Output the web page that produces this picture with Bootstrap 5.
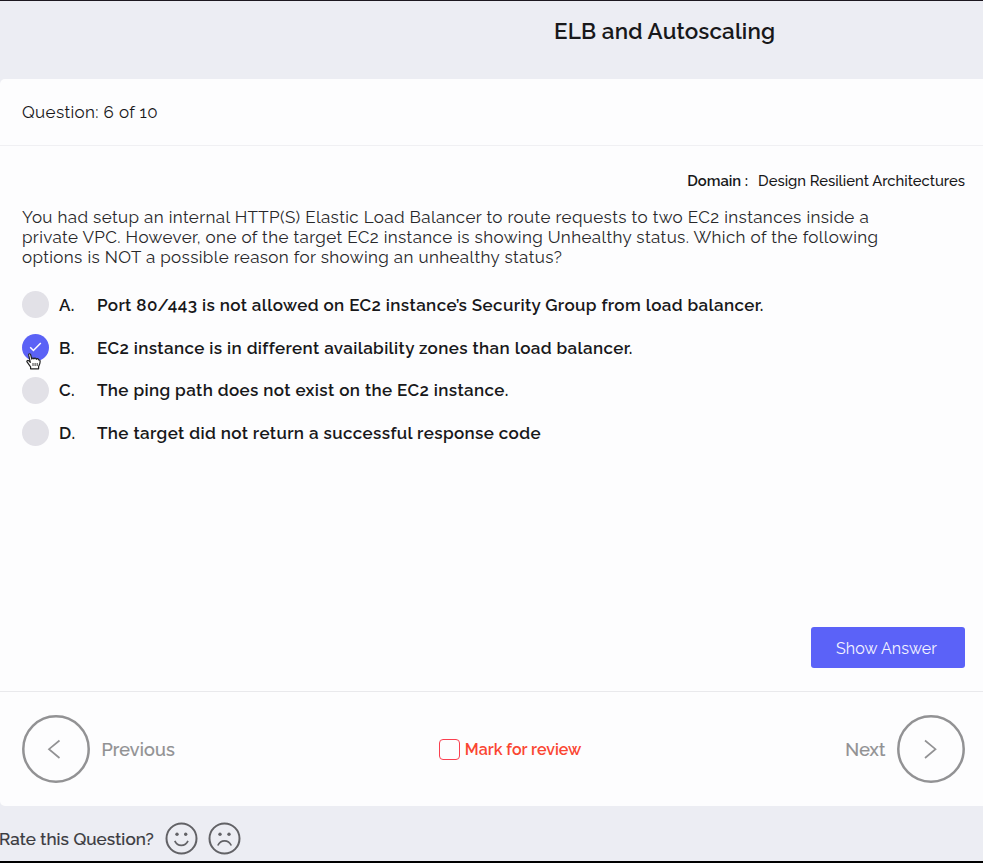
<!DOCTYPE html>
<html lang="en">
<head>
<meta charset="utf-8">
<meta name="viewport" content="width=device-width, initial-scale=1">
<title>ELB and Autoscaling</title>
<link href="https://cdn.jsdelivr.net/npm/bootstrap@5.3.0/dist/css/bootstrap.min.css" rel="stylesheet">
<style>
body{font-family:Raleway,Lato,"Open Sans",sans-serif;background:#ecedf3;color:#18181a;height:863px;overflow:hidden;border-top:1px solid #1d1820;border-bottom:2px solid #000;white-space:nowrap}
.quiz-head{height:78px;padding:15px 0 0 554px}
.quiz-title{font-size:22.4px;font-weight:600;line-height:30px;letter-spacing:.16px}
.quiz-panel{height:727px;background:#fdfdfe;border-radius:5px 0 0 5px}
.quiz-count{height:67px;padding:1px 0 0 22px;font-size:17px;letter-spacing:.36px;border-bottom:1px solid #f0f0f3}
.quiz-body{height:546px;padding:22px 18px 23px 22px;border-bottom:1px solid #e9e9ec}
.domain{font-size:14.8px;line-height:25px;font-weight:500}
.domain-key{font-weight:600;margin-right:10px}
.prompt{font-size:17px;line-height:20px;margin-top:14px;color:#28282a;letter-spacing:.37px}
.options{margin-top:16.5px}
.option{height:42.7px;font-size:17px;font-weight:600;letter-spacing:.37px}
.letter,.answer{padding-top:2px}
.dot{width:27px;height:27px;background:#e2e1e7;margin-right:10px}
.dot.picked{background:#5b62f6}
.dot svg{display:block}
.letter{width:38px}
.hand{left:4px;top:18px}
.btn-answer{width:154px;height:41px;background:#5b62f8;color:#f4f4ff;border-radius:3px;font-size:16px;letter-spacing:.12px;padding:2px 3px 0 0}
.quiz-nav{height:114px;padding:0 18px 0 22px;color:#919193;font-size:18px;font-weight:500}
.nav-side{gap:11.5px}
.nav-text{padding-top:1px;letter-spacing:.15px;-webkit-text-stroke:.2px #919193}
.review{color:#fa4632;font-size:16px;font-weight:600}
.review-text{padding-top:2px}
.box{width:21px;height:21px;border:1px solid #fa4050;border-radius:4px;margin-right:5px}
.rate{height:55px;padding-top:9px;font-size:17.1px;font-weight:500;color:#3b3b3f}
.rate-text{width:166px;padding-top:3px;margin-left:-1px;letter-spacing:.09px;-webkit-text-stroke:.2px #3b3b3f}
.faces{gap:10px}
</style>
</head>
<body>
<header class="quiz-head"><h1 class="quiz-title mb-0">ELB and Autoscaling</h1></header>
<main class="quiz-panel d-flex flex-column">
<div class="quiz-count d-flex align-items-center">Question: 6 of 10</div>
<section class="quiz-body d-flex flex-column">
<div class="domain d-flex justify-content-end"><span class="domain-key">Domain :</span><span>Design Resilient Architectures</span></div>
<p class="prompt mb-0">You had setup an internal HTTP(S) Elastic Load Balancer to route requests to two EC2 instances inside a<br>private VPC. However, one of the target EC2 instance is showing Unhealthy status. Which of the following<br>options is NOT a possible reason for showing an unhealthy status?</p>
<div class="options">
<div class="option d-flex align-items-center"><span class="dot rounded-circle"></span><span class="letter">A.</span><span class="answer">Port 80/443 is not allowed on EC2 instance’s Security Group from load balancer.</span></div>
<div class="option d-flex align-items-center"><span class="dot picked rounded-circle position-relative">
<svg width="27" height="27" viewBox="0 0 27 27" fill="none" stroke="#fff" stroke-width="1.5"><path d="M8.2 13.2l3.2 3.3 7.4-7.6"/></svg>
<svg class="hand position-absolute" width="15" height="18" viewBox="0 0 15 18" fill="#fff" stroke="#222" stroke-width="1.2" stroke-linejoin="round"><path d="M4.6 16.8v-2L1.2 10.200C.3 9 1.700 7.800 2.900 8.900L4.300 10.300 2.700 3.200C2.400 1.500 4.300 1.200 4.700 2.800L5.800 7.200C5.700 5.800 7.700 5.600 8 7c.2-1.200 2-1.200 2.300.3.500-1 2-.8 2.300.5 1.300-.2 1.600.8 1.500 2.200-.1 2-.7 3-1.500 4.500v2.300z"/><path d="M7 11v3M9.100 11v3M11.200 11v3" stroke-width=".9"/></svg>
</span><span class="letter">B.</span><span class="answer">EC2 instance is in different availability zones than load balancer.</span></div>
<div class="option d-flex align-items-center"><span class="dot rounded-circle"></span><span class="letter">C.</span><span class="answer">The ping path does not exist on the EC2 instance.</span></div>
<div class="option d-flex align-items-center"><span class="dot rounded-circle"></span><span class="letter">D.</span><span class="answer">The target did not return a successful response code</span></div>
</div>
<button class="btn btn-answer border-0 mt-auto ms-auto">Show Answer</button>
</section>
<nav class="quiz-nav d-flex align-items-center justify-content-between">
<div class="nav-side d-flex align-items-center"><svg width="68" height="68" viewBox="0 0 68 68" fill="none" stroke="#929294"><circle cx="34" cy="34" r="32.700" stroke-width="2.500"/><path d="M37.500 25.500L27 34.200l10.500 8.800" stroke-width="1.700"/></svg><span class="nav-text">Previous</span></div>
<div class="review d-flex align-items-center"><span class="box"></span><span class="review-text">Mark for review</span></div>
<div class="nav-side d-flex align-items-center"><span class="nav-text">Next</span><svg width="68" height="68" viewBox="0 0 68 68" fill="none" stroke="#929294"><circle cx="34" cy="34" r="32.700" stroke-width="2.500"/><path d="M28 25.500L38.500 34.200l-10.500 8.800" stroke-width="1.700"/></svg></div>
</nav>
</main>
<footer class="rate d-flex align-items-center"><span class="rate-text">Rate this Question?</span>
<div class="faces d-flex">
<svg width="33" height="33" viewBox="0 0 33 33" fill="none" stroke="#626266" stroke-width="2"><circle cx="16.500" cy="16.500" r="15"/><circle cx="12" cy="12.200" r="1.700" fill="#626266" stroke="none"/><circle cx="20.700" cy="12.200" r="1.700" fill="#626266" stroke="none"/><path d="M9.800 18.800c2.500 6 10.500 6 13.200 0" stroke-width="1.700"/></svg>
<svg width="33" height="33" viewBox="0 0 33 33" fill="none" stroke="#626266" stroke-width="2"><circle cx="16.500" cy="16.500" r="15"/><circle cx="12" cy="12.200" r="1.700" fill="#626266" stroke="none"/><circle cx="21" cy="12.200" r="1.700" fill="#626266" stroke="none"/><path d="M9.800 23.500c3-6.200 10.500-6.200 13.500 0" stroke-width="1.700"/></svg>
</div>
</footer>
<script src="https://cdn.jsdelivr.net/npm/bootstrap@5.3.0/dist/js/bootstrap.bundle.min.js"></script>
</body>
</html>
